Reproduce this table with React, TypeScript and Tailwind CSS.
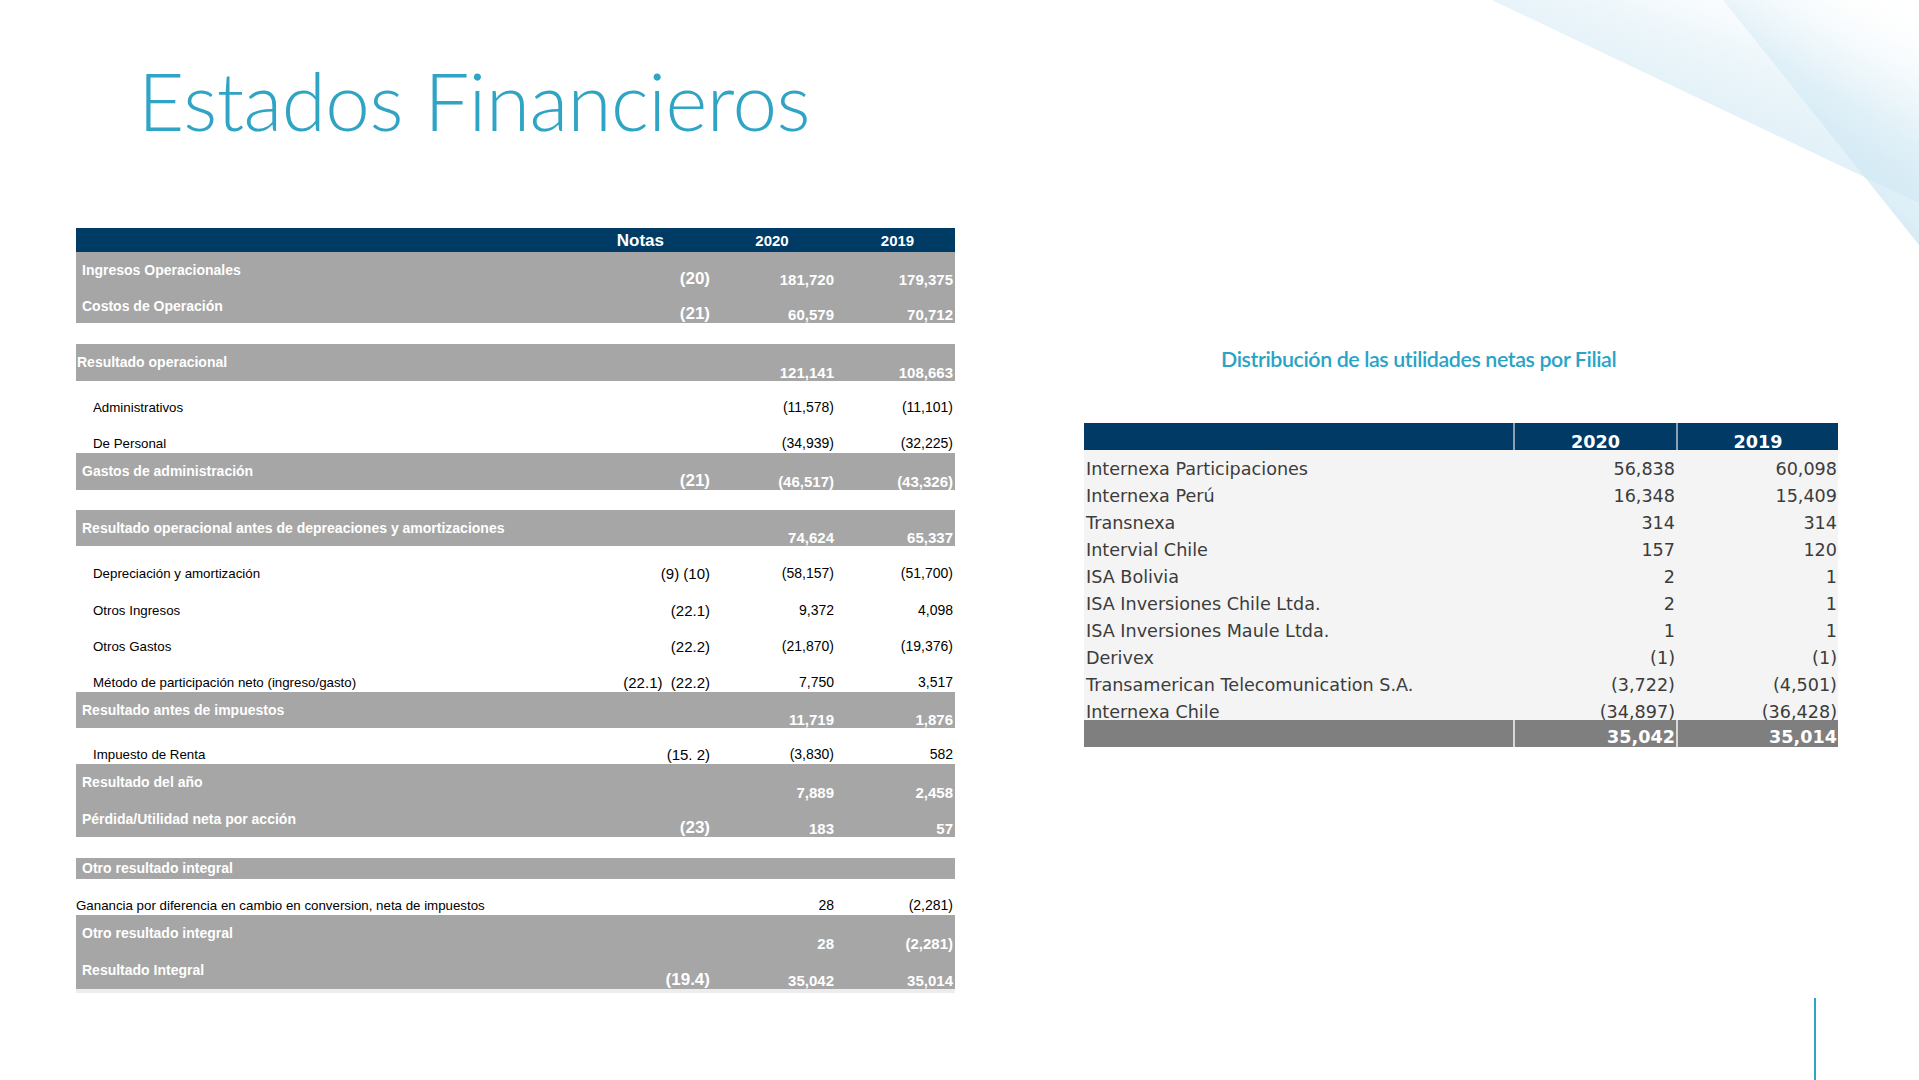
type Row = {
  kind: 'gray' | 'white' | 'gap' | 'band'
  label?: string
  notes?: string
  v20?: string
  v19?: string
  indent?: boolean
  flush?: boolean
  h?: string
}

const rows: Row[] = [
  { kind: 'gray', label: 'Ingresos Operacionales', notes: '(20)', v20: '181,720', v19: '179,375' },
  { kind: 'gray', label: 'Costos de Operación', notes: '(21)', v20: '60,579', v19: '70,712', h: 'h-[35px]' },
  { kind: 'gap', h: 'h-[21px]' },
  { kind: 'gray', label: 'Resultado operacional', v20: '121,141', v19: '108,663', flush: true, h: 'h-[37px]' },
  { kind: 'white', label: 'Administrativos', v20: '(11,578)', v19: '(11,101)', indent: true },
  { kind: 'white', label: 'De Personal', v20: '(34,939)', v19: '(32,225)', indent: true },
  { kind: 'gray', label: 'Gastos de administración', notes: '(21)', v20: '(46,517)', v19: '(43,326)', h: 'h-[37px]' },
  { kind: 'gap', h: 'h-[20px]' },
  { kind: 'gray', label: 'Resultado operacional antes de depreaciones y amortizaciones', v20: '74,624', v19: '65,337' },
  { kind: 'white', label: 'Depreciación y amortización', notes: '(9) (10)', v20: '(58,157)', v19: '(51,700)', indent: true, h: 'h-[37px]' },
  { kind: 'white', label: 'Otros Ingresos', notes: '(22.1)', v20: '9,372', v19: '4,098', indent: true, h: 'h-[37px]' },
  { kind: 'white', label: 'Otros Gastos', notes: '(22.2)', v20: '(21,870)', v19: '(19,376)', indent: true },
  { kind: 'white', label: 'Método de participación neto (ingreso/gasto)', notes: '(22.1)  (22.2)', v20: '7,750', v19: '3,517', indent: true },
  { kind: 'gray', label: 'Resultado antes de impuestos', v20: '11,719', v19: '1,876' },
  { kind: 'white', label: 'Impuesto de Renta', notes: '(15. 2)', v20: '(3,830)', v19: '582', indent: true },
  { kind: 'gray', label: 'Resultado del año', v20: '7,889', v19: '2,458', h: 'h-[37px]' },
  { kind: 'gray', label: 'Pérdida/Utilidad neta por acción', notes: '(23)', v20: '183', v19: '57' },
  { kind: 'gap', h: 'h-[21px]' },
  { kind: 'band', label: 'Otro resultado integral' },
  { kind: 'white', label: 'Ganancia por diferencia en cambio en conversion, neta de impuestos', v20: '28', v19: '(2,281)' },
  { kind: 'gray', label: 'Otro resultado integral', v20: '28', v19: '(2,281)', h: 'h-[37px]' },
  { kind: 'gray', label: 'Resultado Integral', notes: '(19.4)', v20: '35,042', v19: '35,014', h: 'h-[37px]' },
]

const filiales: [string, string, string][] = [
  ['Internexa Participaciones', '56,838', '60,098'],
  ['Internexa Perú', '16,348', '15,409'],
  ['Transnexa', '314', '314'],
  ['Intervial Chile', '157', '120'],
  ['ISA Bolivia', '2', '1'],
  ['ISA Inversiones Chile Ltda.', '2', '1'],
  ['ISA Inversiones Maule Ltda.', '1', '1'],
  ['Derivex', '(1)', '(1)'],
  ['Transamerican Telecomunication S.A.', '(3,722)', '(4,501)'],
  ['Internexa Chile', '(34,897)', '(36,428)'],
]

const grid = 'grid grid-cols-[524px_110px_124px_121px]'

function ResultRow({ row }: { row: Row }) {
  if (row.kind === 'gap') return <div className={row.h} />

  if (row.kind === 'band') {
    return (
      <div className="flex h-[21px] items-center bg-[#a6a6a6] pl-[6px] text-[14px] font-bold leading-[15px] text-white">
        {row.label}
      </div>
    )
  }

  if (row.kind === 'gray') {
    return (
      <div className={`${grid} ${row.h ?? 'h-[36px]'} bg-[#a6a6a6] text-white`}>
        <div className={`${row.flush ? 'pl-[1px]' : 'pl-[6px]'} pt-[10px] text-[14px] font-bold leading-[16px] whitespace-nowrap`}>
          {row.label}
        </div>
        <div className="flex items-end justify-end text-[17px] font-bold leading-[18px]">{row.notes}</div>
        <div className="flex items-end justify-end text-[15px] font-bold leading-[17px]">{row.v20}</div>
        <div className="flex items-end justify-end pr-[2px] text-[15px] font-bold leading-[17px]">{row.v19}</div>
      </div>
    )
  }

  return (
    <div className={`${grid} ${row.h ?? 'h-[36px]'} text-black`}>
      <div className={`flex items-end pb-[1px] ${row.indent ? 'pl-[17px]' : 'pl-0'} text-[13.3px] leading-[16px] whitespace-nowrap`}>
        {row.label}
      </div>
      <div className="flex items-end justify-end whitespace-pre pb-[1px] text-[15px] leading-[17px]">{row.notes}</div>
      <div className="flex items-end justify-end pb-[1px] text-[14px] leading-[17px]">{row.v20}</div>
      <div className="flex items-end justify-end pb-[1px] pr-[2px] text-[14px] leading-[17px]">{row.v19}</div>
    </div>
  )
}

function ResultsTable() {
  return (
    <div className="w-[879px] font-['Liberation_Sans',Arial,sans-serif]">
      <div className={`${grid} h-[24px] items-center bg-[#003b66] font-bold text-white`}>
        <div />
        <div className="pr-[46px] text-right text-[17px]">Notas</div>
        <div className="text-center text-[15px]">2020</div>
        <div className="pl-[6px] text-center text-[15px]">2019</div>
      </div>
      {rows.map((row, i) => (
        <ResultRow key={i} row={row} />
      ))}
      <div className="h-[4px] bg-[#ededed]" />
    </div>
  )
}

function FilialTable() {
  return (
    <div className="w-[754px] font-['DejaVu_Sans',Verdana,sans-serif] text-[17.6px]">
      <div className="grid h-[27px] grid-cols-[429px_163px_162px] bg-[#003a65] font-bold text-white">
        <div />
        <div className="flex items-end justify-center border-l-2 border-[#8d9fb2] leading-[15px]">2020</div>
        <div className="flex items-end justify-center border-l-2 border-[#8d9fb2] leading-[15px]">2019</div>
      </div>
      <div className="bg-[#f4f4f4] text-[#3c3c3c]">
        {filiales.map(([name, a, b]) => (
          <div key={name} className="grid h-[27px] grid-cols-[429px_163px_162px] leading-[16px]">
            <div className="flex items-end pl-[2px]">{name}</div>
            <div className="flex items-end justify-end pr-[1px]">{a}</div>
            <div className="flex items-end justify-end pr-[1px]">{b}</div>
          </div>
        ))}
      </div>
      <div className="grid h-[27px] grid-cols-[429px_163px_162px] bg-[#7f7f7f] font-bold leading-[20px] text-white">
        <div />
        <div className="flex items-end justify-end border-l-2 border-[#d8d8d8] pr-[1px]">35,042</div>
        <div className="flex items-end justify-end border-l-2 border-[#d8d8d8] pr-[1px]">35,014</div>
      </div>
    </div>
  )
}

function CornerShapes() {
  return (
    <svg className="absolute right-0 top-0" width="469" height="260" viewBox="0 0 469 260">
      <defs>
        <linearGradient id="triA" x1="0.25" y1="1" x2="1" y2="0">
          <stop offset="0" stopColor="#c4e3f0" stopOpacity="0.85" />
          <stop offset="0.6" stopColor="#e3f1f8" stopOpacity="0.7" />
          <stop offset="1" stopColor="#ffffff" stopOpacity="0" />
        </linearGradient>
        <linearGradient id="triB" x1="0.3" y1="1" x2="0.9" y2="0">
          <stop offset="0" stopColor="#b6dced" stopOpacity="0.85" />
          <stop offset="0.55" stopColor="#d6ebf5" stopOpacity="0.6" />
          <stop offset="1" stopColor="#ffffff" stopOpacity="0" />
        </linearGradient>
      </defs>
      <polygon points="42,0 469,0 469,203" fill="url(#triA)" />
      <polygon points="273,0 469,0 469,245" fill="url(#triB)" />
    </svg>
  )
}

export default function App() {
  return (
    <div className="relative h-[1080px] w-[1919px] overflow-hidden bg-white">
      <CornerShapes />
      <div className="absolute bottom-0 left-[1814px] h-[82px] w-[2px] bg-[#2ea3c3]" />

      <div className="h-[228px] pl-[138px] pt-[60px]">
        <h1 className="font-['Lato',sans-serif] text-[80px] font-light leading-none tracking-[-0.5px] text-[#2fa4c4]">
          Estados Financieros
        </h1>
      </div>

      <div className="flex items-start">
        <div className="ml-[76px]">
          <ResultsTable />
        </div>
        <div className="ml-[129px]">
          <div className="pl-[137px] pt-[118px] font-['Lato',sans-serif] text-[21.4px] font-semibold leading-[26px] tracking-[-0.4px] text-[#2aa3c6]">
            Distribución de las utilidades netas por Filial
          </div>
          <div className="mt-[51px]">
            <FilialTable />
          </div>
        </div>
      </div>
    </div>
  )
}
